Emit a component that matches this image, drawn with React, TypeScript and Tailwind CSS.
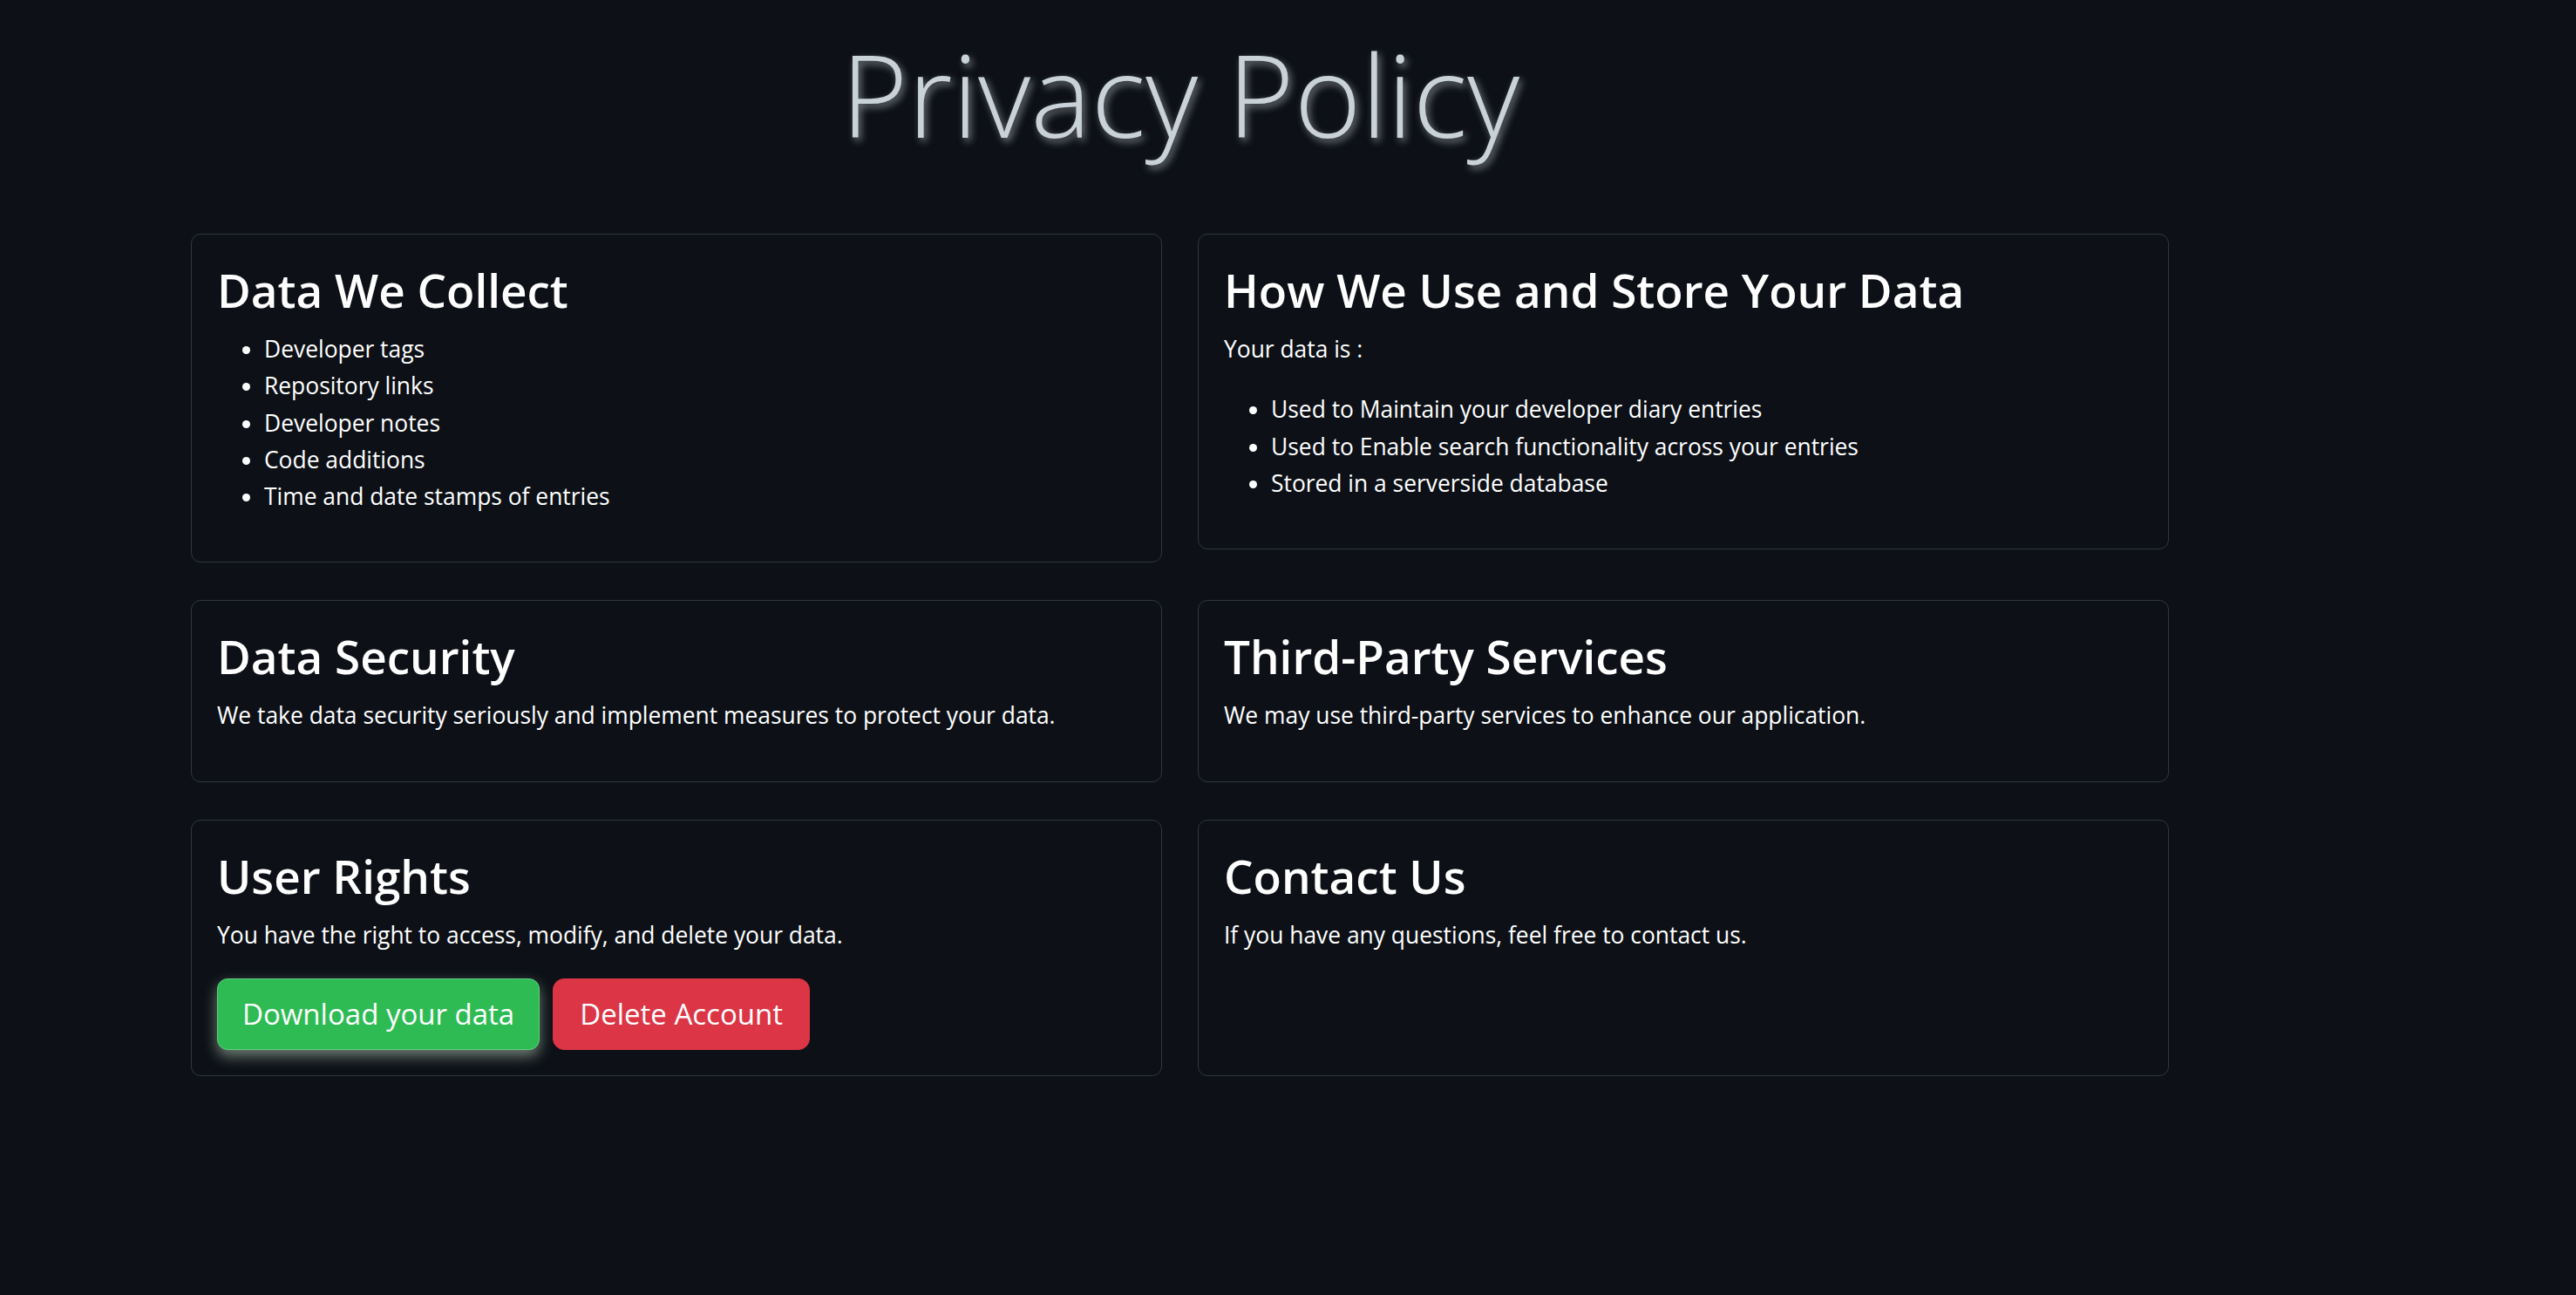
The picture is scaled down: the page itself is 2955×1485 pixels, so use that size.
const collected = [
  "Developer tags",
  "Repository links",
  "Developer notes",
  "Code additions",
  "Time and date stamps of entries",
];

const usage = [
  "Used to Maintain your developer diary entries",
  "Used to Enable search functionality across your entries",
  "Stored in a serverside database",
];

function Card({ title, children }: { title: string; children: React.ReactNode }) {
  return (
    <section className="w-[1114px] rounded-[11px] border border-[#30363d] bg-[#0d1117] px-[29px] pt-[29px] pb-[26px]">
      <h2 className="mb-[12px] text-[53px] font-semibold leading-[69px] text-white">{title}</h2>
      {children}
    </section>
  );
}

function Bullets({ items }: { items: string[] }) {
  return (
    <ul className="mb-[28px] list-disc pl-[54px] marker:text-white">
      {items.map((item) => (
        <li key={item} className="text-[26.4px] leading-[42.3px] text-white">
          {item}
        </li>
      ))}
    </ul>
  );
}

export default function App() {
  return (
    <div
      className="min-h-[1485px] w-full bg-[#0d1117] pt-[24px]"
      style={{ fontFamily: '"Open Sans", "Noto Sans", sans-serif' }}
    >
      <div className="ml-[219px] w-[2270px]">
        <h1
          className="mb-[78px] text-center text-[131px] font-light leading-[166px] text-[#c9d1d9]"
          style={{ textShadow: "3px 4px 8px rgba(201, 209, 217, 0.55)" }}
        >
          Privacy Policy
        </h1>

        <div className="flex flex-col gap-[43px]">
          <div className="flex items-start gap-[41px]">
            <Card title="Data We Collect">
              <Bullets items={collected} />
            </Card>
            <Card title="How We Use and Store Your Data">
              <p className="mb-[27px] text-[26.4px] leading-[42.3px] text-white">Your data is :</p>
              <Bullets items={usage} />
            </Card>
          </div>

          <div className="flex items-start gap-[41px]">
            <Card title="Data Security">
              <p className="mb-[28px] text-[26.4px] leading-[42.3px] text-white">
                We take data security seriously and implement measures to protect your data.
              </p>
            </Card>
            <Card title="Third-Party Services">
              <p className="mb-[28px] text-[26.4px] leading-[42.3px] text-white">
                We may use third-party services to enhance our application.
              </p>
            </Card>
          </div>

          <div className="flex items-stretch gap-[41px]">
            <Card title="User Rights">
              <p className="mb-[29px] text-[26.4px] leading-[42.3px] text-white">
                You have the right to access, modify, and delete your data.
              </p>
              <div className="mb-[3px] flex gap-[15px]">
                <button className="h-[82px] rounded-[12px] border border-[#5fd083] bg-[#2ebb54] px-[28px] text-[33px] text-white shadow-[0_7px_16px_rgba(210,235,210,0.5)]">
                  Download your data
                </button>
                <button className="h-[82px] rounded-[13px] border border-[#dc3545] bg-[#dc3545] px-[30px] text-[33px] text-white">
                  Delete Account
                </button>
              </div>
            </Card>
            <Card title="Contact Us">
              <p className="mb-[28px] text-[26.4px] leading-[42.3px] text-white">
                If you have any questions, feel free to contact us.
              </p>
            </Card>
          </div>
        </div>
      </div>
    </div>
  );
}
